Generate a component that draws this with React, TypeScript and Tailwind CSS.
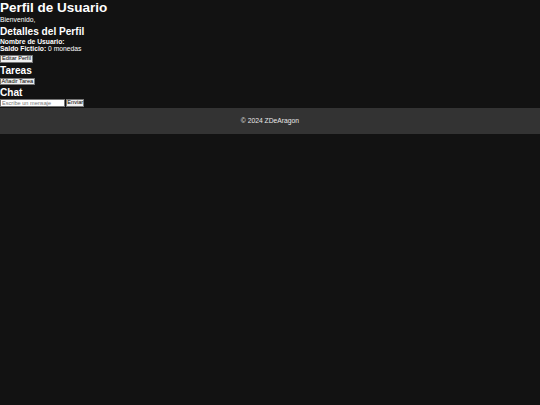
import React from "react";

export default function App() {
  const font = { fontFamily: '"Liberation Sans", Arial, sans-serif' };
  return (
    <div className="min-h-[405px] w-[540px] bg-[#121212] text-white" style={font}>
      <div className="flex flex-col items-start">
        <h1 className="m-0 text-[13.5px] font-bold leading-[15.5px]">Perfil de Usuario</h1>
        <p className="m-0 text-[6.75px] leading-[7.8px]">Bienvenido, </p>
        <h2 className="m-0 mt-[2.7px] text-[10.125px] font-bold leading-[11.6px]">Detalles del Perfil</h2>
        <p className="m-0 text-[6.75px] leading-[7.8px]">
          <strong>Nombre de Usuario:</strong>
        </p>
        <p className="m-0 text-[6.75px] leading-[7.8px]">
          <strong>Saldo Ficticio:</strong> 0 monedas
        </p>
        <button className="mt-[2px] flex h-[7.7px] items-center border-[0.8px] border-[#767676] bg-[#efefef] px-[1px] text-[5.6px] leading-none text-black">
          Editar Perfil
        </button>
        <h2 className="m-0 mt-[2.5px] text-[10.125px] font-bold leading-[11.6px]">Tareas</h2>
        <button className="mt-[0.7px] flex h-[7.5px] items-center border-[0.8px] border-[#767676] bg-[#efefef] px-[0.5px] text-[5.6px] leading-none text-black">
          Añadir Tarea
        </button>
        <h2 className="m-0 mt-[1.5px] text-[10.125px] font-bold leading-[11.6px]">Chat</h2>
        <div className="mt-[0.6px] flex items-center gap-[1.6px]">
          <input
            type="text"
            placeholder="Escribe un mensaje"
            className="h-[8.6px] w-[64.7px] border-[0.8px] border-[#767676] bg-white px-[1px] text-[5.6px] leading-none text-black placeholder:text-[#757575] outline-none"
          />
          <button className="flex h-[8px] w-[18px] items-center justify-center border-[0.8px] border-[#767676] bg-[#efefef] text-[5.6px] leading-none text-black">
            Enviar
          </button>
        </div>
      </div>
      <footer className="mt-[0.4px] flex h-[26.6px] items-center justify-center bg-[#333333] text-[6.75px] leading-[7.8px] text-[#e8e8e8]">
        © 2024 ZDeAragon
      </footer>
    </div>
  );
}
